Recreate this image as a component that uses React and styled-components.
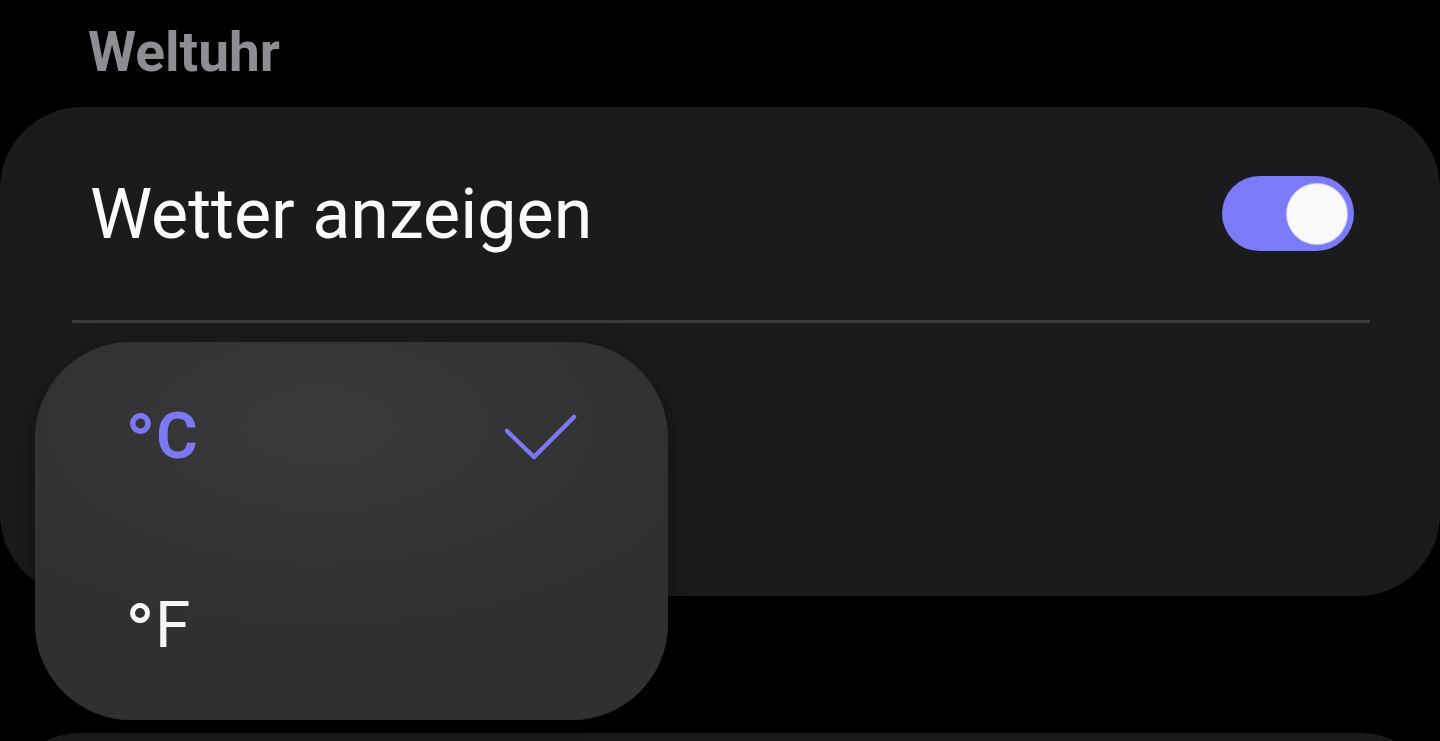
import React from 'react';
import styled, { createGlobalStyle } from 'styled-components';

const GlobalStyle = createGlobalStyle`
  html, body {
    margin: 0;
    padding: 0;
    background: #000;
  }
  body {
    font-family: Roboto, "Noto Sans", "Liberation Sans", sans-serif;
  }
`;

const Page = styled.div`
  position: relative;
  width: 1440px;
  height: 741px;
  overflow: hidden;
  background: #000;
`;

const SectionTitle = styled.h2`
  margin: 0;
  padding: 25px 0 27px 88px;
  font-size: 55px;
  line-height: 1;
  font-weight: 700;
  color: #8e8e92;
`;

const Card = styled.div`
  background: #1b1b1d;
  border-radius: 82px;
  display: flex;
  flex-direction: column;
  margin-bottom: ${(p) => p.gap || 0}px;
`;

const Row = styled.div`
  display: flex;
  align-items: center;
  justify-content: space-between;
  height: ${(p) => p.height}px;
  padding: 0 86px 0 90px;
`;

const RowLabel = styled.span`
  font-size: 70px;
  line-height: 1;
  font-weight: 400;
  color: #fafafc;
`;

const Divider = styled.div`
  height: 3px;
  margin: 0 70px 0 72px;
  background: #3c3c3e;
`;

const Switch = styled.div`
  width: 132px;
  height: 75px;
  border-radius: 38px;
  background: #7c7bf7;
  display: flex;
  align-items: center;
  justify-content: flex-end;
  padding-right: 7px;
  box-sizing: border-box;
`;

const Knob = styled.div`
  width: 60px;
  height: 60px;
  border-radius: 50%;
  background: #f9f9fc;
  box-shadow: 0 0 0 1px rgba(255, 255, 255, 0.6);
`;

const Menu = styled.div`
  position: absolute;
  left: 35px;
  top: 342px;
  width: 633px;
  height: 378px;
  border-radius: 96px;
  background: radial-gradient(ellipse 70% 60% at 45% 22%, #3a3a3d 0%, #333336 55%, #303033 100%);
  box-shadow: 0 8px 30px rgba(0, 0, 0, 0.35);
  display: flex;
  flex-direction: column;
`;

const MenuItem = styled.div`
  height: 189px;
  display: flex;
  align-items: center;
  justify-content: space-between;
  padding: 0 91px 0 90px;
`;

const MenuText = styled.span`
  font-size: 64px;
  line-height: 1;
  font-weight: ${(p) => (p.selected ? 600 : 400)};
  color: ${(p) => (p.selected ? '#7a79f2' : '#f6f6f8')};
`;

const Degree = styled.span`
  font-size: 80px;
  line-height: 0;
  vertical-align: -13px;
`;

const Check = () => (
  <svg width="72" height="48" viewBox="0 0 72 48" fill="none">
    <polyline
      points="2,18 29,44 69,4"
      stroke="#7a79f2"
      strokeWidth="4.5"
      strokeLinecap="round"
      strokeLinejoin="round"
    />
  </svg>
);

export default function App() {
  return (
    <>
      <GlobalStyle />
      <Page>
        <SectionTitle>Weltuhr</SectionTitle>
        <Card gap={137}>
          <Row height={213}>
            <RowLabel>Wetter anzeigen</RowLabel>
            <Switch>
              <Knob />
            </Switch>
          </Row>
          <Divider />
          <Row height={273} />
        </Card>
        <Card>
          <Row height={160} />
        </Card>
        <Menu>
          <MenuItem>
            <MenuText selected>
              <Degree>°</Degree>C
            </MenuText>
            <Check />
          </MenuItem>
          <MenuItem>
            <MenuText>
              <Degree>°</Degree>F
            </MenuText>
          </MenuItem>
        </Menu>
      </Page>
    </>
  );
}
